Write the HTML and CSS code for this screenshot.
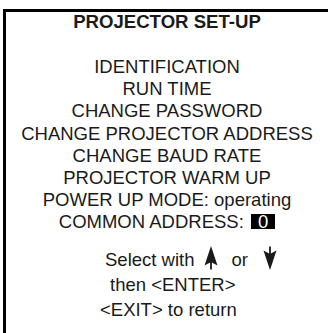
FILE: index.html
```html
<!DOCTYPE html>
<html lang="en">
<head>
    <title>Projector Set-Up</title>
    <link rel="stylesheet" href="styles.css">
</head>
<body>
    <div class="menu">
        <h1 class="title">PROJECTOR SET-UP</h1>
        <ul class="items">
            <li>IDENTIFICATION</li>
            <li>RUN TIME</li>
            <li>CHANGE PASSWORD</li>
            <li>CHANGE PROJECTOR ADDRESS</li>
            <li>CHANGE BAUD RATE</li>
            <li>PROJECTOR WARM UP</li>
            <li>POWER UP MODE: operating</li>
            <li>COMMON ADDRESS: <span class="value">0</span></li>
        </ul>
        <div class="hint">
            <div class="hint-line select">
                <span>Select with</span>
                <svg class="arrow up" width="14" height="24" viewBox="0 0 14 24">
                    <path d="M7 0 L13.5 19.5 L7.9 16.5 L7.9 23.5 L6.1 23.5 L6.1 16.5 L0.5 19.5 Z" fill="#1a1a1a"/>
                </svg>
                <span>or</span>
                <svg class="arrow down" width="14" height="24" viewBox="0 0 14 24">
                    <path d="M7 24 L13.5 4.5 L7.9 7.5 L7.9 0.5 L6.1 0.5 L6.1 7.5 L0.5 4.5 Z" fill="#1a1a1a"/>
                </svg>
            </div>
            <div class="hint-line enter">then &lt;ENTER&gt;</div>
            <div class="hint-line">&lt;EXIT&gt; to return</div>
        </div>
    </div>
</body>
</html>
```

FILE: styles.css
```css
body {
    margin: 0;
    background-color: #fff;
    color: #1a1a1a;
    font-family: "Liberation Sans", Arial, sans-serif;
    overflow: hidden;
}

.menu {
    box-sizing: border-box;
    width: 328px;
    height: 340px;
    margin: 9px 0 0 3px;
    border: 3px solid #000;
}

.title {
    margin: 0;
    font-size: 18.6px;
    line-height: 19px;
    font-weight: bold;
    text-align: center;
}

.items {
    list-style: none;
    margin: 25px 0 0;
    padding: 0;
    font-size: 18.5px;
    line-height: 22.2px;
    text-align: center;
}

.value {
    display: inline-block;
    padding: 0 7px;
    margin-left: 2px;
    line-height: 15px;
    background-color: #000;
    color: #fff;
}

.hint {
    margin-top: 13px;
    padding-left: 94px;
    font-size: 18.5px;
    line-height: 25px;
}

.select {
    display: flex;
    align-items: center;
    margin-left: 5px;
}

.arrow.up {
    margin: -2px 13px 0 10px;
}

.arrow.down {
    margin: -2px 0 0 15px;
}

.enter {
    margin-left: 10px;
}
```
